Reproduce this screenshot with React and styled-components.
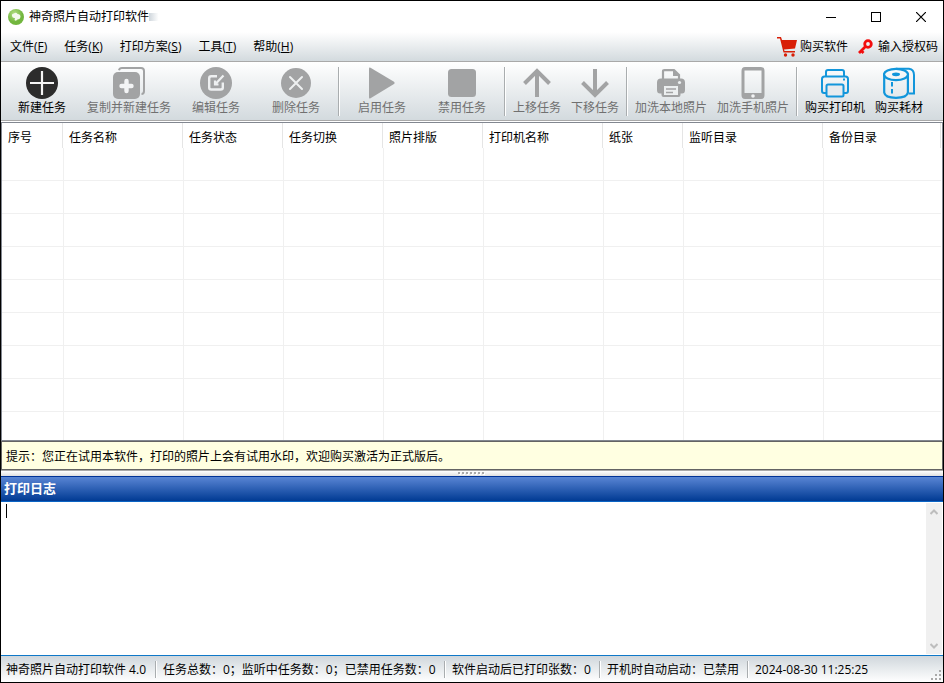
import React from "react";
import styled, { createGlobalStyle } from "styled-components";

const GlobalStyle = createGlobalStyle`
  * { box-sizing: border-box; }
  body {
    margin: 0;
    background: #fff;
    color: #000;
    font: 12px/16px "Open Sans", "Noto Sans CJK SC", sans-serif;
  }
  button { font: inherit; color: inherit; background: none; border: 0; padding: 0; margin: 0; }
`;

const Window = styled.div`
  min-height: 100vh;
  display: flex;
  flex-direction: column;
  border: 1px solid #000;
  background: #fff;
  white-space: nowrap;
`;

const TitleBar = styled.header`
  display: flex;
  align-items: center;
  height: 31px;
  padding-left: 7px;
`;

const Title = styled.h1`
  margin: 0 0 0 5px;
  padding-top: 1px;
  font-size: 12px;
  font-weight: 400;
`;

const TitleFade = styled.span`
  width: 24px;
  height: 8px;
  margin-right: auto;
  background: linear-gradient(90deg, #cfd6dc, #fff 40%);
`;

const CaptionButton = styled.button`
  display: grid;
  place-items: center;
  width: 45px;
  height: 30px;
`;

const MenuBar = styled.nav`
  display: flex;
  align-items: center;
  gap: 1px;
  height: 30px;
  padding: 1px 5px 0 1px;
  background: linear-gradient(#fff, #d3dade);
  border-bottom: 1px solid #a9a9a9;
`;

const MenuButton = styled.button`
  padding: 0 8px;
`;

const LicenseLinks = styled.div`
  display: flex;
  gap: 10px;
  margin-left: auto;
`;

const LicenseButton = styled.button`
  display: flex;
  align-items: center;
  gap: ${(p) => p.$gap}px;
`;

const ToolBar = styled.div`
  display: flex;
  height: 59px;
  padding-left: 1px;
  background: linear-gradient(#fff, #d3dade);
  border-bottom: 1px solid #a9a9a9;
`;

const ToolButton = styled.button`
  display: flex;
  flex-direction: column;
  align-items: center;
  gap: 1px;
  min-width: ${(p) => (p.$wide ? 80 : 58)}px;
  padding: 5px 5px 0;
  color: #000;
  &:disabled { color: #707070; }
  svg { display: block; }
`;

const ToolDivider = styled.span`
  width: 2px;
  margin: 5px 2px 4px;
  background: linear-gradient(90deg, #a9adaf 50%, #fff 50%);
`;

const TaskPane = styled.main`
  margin-top: 1px;
  padding-right: 1px;
  border: 1px solid #828790;
`;

const TaskTable = styled.table`
  width: 100%;
  table-layout: fixed;
  border-collapse: separate;
  border-spacing: 0;
`;

const HeadCell = styled.th`
  height: 25px;
  padding: 5px 0 0 6px;
  text-align: left;
  font-weight: 400;
  border-right: 1px solid #e5e5e5;
`;

const BodyCell = styled.td`
  height: ${(p) => (p.$last ? 28 : 33)}px;
  padding: 0;
  border-bottom: ${(p) => (p.$last ? 0 : 1)}px solid #f0f0f0;
  & + & { border-left: 1px solid #f0f0f0; }
`;

const Hint = styled.p`
  margin: 0;
  height: 29px;
  padding: 7px 4px 4px;
  background: #ffffe1;
  border: 1px solid #646464;
`;

const Splitter = styled.div`
  display: flex;
  justify-content: center;
  align-items: center;
  height: 6px;
  border-top: 1px solid #a9a9a9;
  background: linear-gradient(#fff, #e0e0e0);
`;

const LogHeader = styled.h2`
  margin: 0;
  height: 26px;
  padding: 3px;
  color: #fff;
  font-size: 13px;
  font-weight: 700;
  line-height: 16px;
  background: linear-gradient(#5985d4, #003a93);
  border-top: 1px solid #003296;
  border-bottom: 1px solid #0a64c4;
`;

const LogPane = styled.section`
  position: relative;
  flex: 1;
  display: flex;
  min-height: 120px;
  padding: 1px 1px 1px 0;
`;

const LogText = styled.textarea`
  flex: 1;
  padding: 2px 5px;
  border: 0;
  outline: 0;
  resize: none;
  font: inherit;
`;

const Caret = styled.span`
  position: absolute;
  left: 5px;
  top: 2px;
  width: 1px;
  height: 14px;
  background: #000;
`;

const ScrollTrack = styled.div`
  display: flex;
  flex-direction: column;
  justify-content: space-between;
  width: 16px;
  background: #f0f0f0;
`;

const ScrollButton = styled.button`
  display: grid;
  place-items: center;
  width: 16px;
  height: 17px;
`;

const StatusBar = styled.footer`
  display: flex;
  align-items: center;
  height: 27px;
  border-top: 1px solid #0f78c8;
  background: linear-gradient(#d0d7dc, #fff);
`;

const StatusItem = styled.span`
  width: ${(p) => p.$width}px;
  padding-top: 2px;
  padding-left: ${(p) => (p.$first ? 5 : 6)}px;
`;

const StatusDivider = styled.span`
  width: 2px;
  height: 17px;
  background: linear-gradient(90deg, #a9adaf 50%, #fff 50%);
`;

const GripSlot = styled.span`
  align-self: flex-end;
  margin-left: auto;
  padding: 0 1px 1px 0;
  line-height: 0;
`;

const GRAY = "#a2a3a4";
const BLUE = "#1296db";

const Icon = ({ children, size = 32, box = 32 }) => (
  <svg width={size} height={size} viewBox={`0 0 ${box} ${box}`} fill="none" aria-hidden="true">
    {children}
  </svg>
);

const icons = {
  add: (
    <>
      <circle cx="16" cy="16" r="16" fill="#2c2c2c" />
      <path d="M16 4v24M4 16h24" stroke="#f4f4f4" strokeWidth="2.2" />
    </>
  ),
  copy: (
    <>
      <path d="M6 3.2Q6.500 1 9 1H28Q31 1 31 4V24Q31 27 28.500 27" stroke={GRAY} strokeWidth="2" />
      <rect x="0" y="5" width="27" height="27" rx="5" fill={GRAY} />
      <path d="M13.500 14v10M8.500 19h10" stroke="#f3f4f5" strokeWidth="4.400" strokeLinecap="round" />
    </>
  ),
  edit: (
    <>
      <circle cx="16" cy="16" r="16" fill={GRAY} />
      <path d="M17 9.200H11.200Q9.200 9.200 9.200 11.200V20.500Q9.200 22.500 11.200 22.500H20.800Q22.800 22.500 22.800 20.500V15.500" stroke="#eef0f1" strokeWidth="2.400" />
      <path d="M15 17.500L23.500 8.500M15 13.500V17.500H18.500" stroke="#eef0f1" strokeWidth="2.200" />
    </>
  ),
  remove: (
    <>
      <circle cx="16" cy="16" r="15" fill={GRAY} />
      <path d="M10 10l12 12M22 10L10 22" stroke="#eef0f1" strokeWidth="2" strokeLinecap="round" />
    </>
  ),
  play: <path d="M3 1.500Q3 0 4.500 .8L28 14.800Q29.500 16 28 17L4.500 31.200Q3 32 3 30.500Z" fill={GRAY} />,
  stop: <rect x="2" y="2" width="28" height="28" rx="3.500" fill={GRAY} />,
  up: <path d="M16 30V4.500M3.500 16.500L16 4L28.500 16.500" stroke={GRAY} strokeWidth="4" />,
  down: <path d="M16 2V27.500M3.500 15.500L16 28L28.500 15.500" stroke={GRAY} strokeWidth="4" />,
  printerGray: (
    <>
      <path d="M8 12V4.500Q8 3.200 9.500 3.200H19L24 8V12" stroke={GRAY} strokeWidth="2.200" />
      <path d="M18 3v6h6z" fill={GRAY} />
      <path d="M6 11.500H26Q30 11.500 30 15.500V23Q30 26.500 27 26.500H25.500V28Q25.500 30 23.500 30H8.500Q6.500 30 6.500 28V26.500H5Q2 26.500 2 23V15.500Q2 11.500 6 11.500Z" fill={GRAY} />
      <circle cx="24.500" cy="15.500" r="1.600" fill="#eceff0" />
      <rect x="9" y="19" width="14" height="9" fill="#eceff0" />
      <path d="M11 22h10M11 25.500h7" stroke={GRAY} strokeWidth="1.600" />
    </>
  ),
  phone: (
    <>
      <path fillRule="evenodd" d="M8 0H24Q27.500 0 27.500 4V28Q27.500 32 24 32H8Q4.500 32 4.500 28V4Q4.500 0 8 0ZM7.500 3.500V26H24.500V3.500Z" fill={GRAY} />
      <circle cx="16" cy="29" r="1.800" fill="#f2f3f4" />
    </>
  ),
  printerBlue: (
    <>
      <path d="M7 9V5Q7 3 9 3H23Q25 3 25 5V9" stroke={BLUE} strokeWidth="2" />
      <path d="M7 26H5Q3 26 3 24V12Q3 9.500 5.500 9.500H26.500Q29 9.500 29 12V24Q29 26 27 26H25" stroke={BLUE} strokeWidth="2" />
      <rect x="7.500" y="17.500" width="17" height="12" rx="1.500" fill="#e8ebee" stroke={BLUE} strokeWidth="2" />
      <rect x="24" y="11.500" width="2" height="2" fill={BLUE} />
    </>
  ),
  roll: (
    <>
      <path d="M13 1.800H26Q31 2.500 31 8V26.500H25.500" stroke={BLUE} strokeWidth="2" />
      <ellipse cx="13" cy="7.500" rx="12" ry="5.700" stroke={BLUE} strokeWidth="2.200" />
      <ellipse cx="13" cy="7.300" rx="4" ry="1.900" fill={BLUE} />
      <path d="M1.200 8V25.500Q2 30.800 13 30.800Q24 30.800 24.900 25.500V8" stroke={BLUE} strokeWidth="2.200" />
      <path d="M9 15v14" stroke={BLUE} strokeWidth="2" strokeDasharray="4.500 2.500" />
    </>
  ),
};

const tools = [
  { label: "新建任务", icon: "add", wide: true, on: true },
  { label: "复制并新建任务", icon: "copy", wide: true },
  { label: "编辑任务", icon: "edit", wide: true },
  { label: "删除任务", icon: "remove", wide: true },
  null,
  { label: "启用任务", icon: "play", wide: true },
  { label: "禁用任务", icon: "stop", wide: true },
  null,
  { label: "上移任务", icon: "up" },
  { label: "下移任务", icon: "down" },
  null,
  { label: "加洗本地照片", icon: "printerGray" },
  { label: "加洗手机照片", icon: "phone" },
  null,
  { label: "购买打印机", icon: "printerBlue", on: true },
  { label: "购买耗材", icon: "roll", on: true },
];

const menus = [["文件", "F"], ["任务", "K"], ["打印方案", "S"], ["工具", "T"], ["帮助", "H"]];

const columns = [
  ["序号", 61], ["任务名称", 120], ["任务状态", 100], ["任务切换", 100], ["照片排版", 100],
  ["打印机名称", 120], ["纸张", 80], ["监听目录", 140], ["备份目录"],
];

const statuses = [
  ["神奇照片自动打印软件 4.0", 154],
  ["任务总数：0；监听中任务数：0；已禁用任务数：0", 287],
  ["软件启动后已打印张数：0", 153],
  ["开机时自动启动：已禁用", 146],
  ["2024-08-30 11:25:25", 130],
];

const AppLogo = () => (
  <svg width="16" height="16" viewBox="0 0 16 16" aria-hidden="true">
    <defs>
      <radialGradient id="leaf" cx="40%" cy="30%">
        <stop offset="0" stopColor="#b4df85" />
        <stop offset="1" stopColor="#72b63e" />
      </radialGradient>
    </defs>
    <circle cx="8" cy="8" r="8" fill="url(#leaf)" />
    <path d="M4 7Q3.500 4.500 6 4.500Q8 2.800 9.500 5Q12.500 5 12.500 8Q12 10.500 9.500 10.500Q8 12.500 6.500 11L7 9Q4.500 9.500 4 7Z" fill="#f4faed" />
  </svg>
);

const Cart = () => (
  <svg width="20" height="20" viewBox="0 0 20 20" fill="#d81e06" aria-hidden="true">
    <path d="M0 0H4L5 3H20L18 11.500L7 12.500L7.500 14H18V15.500H6.500L3 1.500H0Z" />
    <circle cx="8.500" cy="18" r="1.700" />
    <circle cx="16" cy="18" r="1.700" />
  </svg>
);

const Key = () => (
  <svg width="15" height="16" viewBox="0 0 15 16" fill="none" aria-hidden="true">
    <circle cx="10" cy="5" r="3.300" stroke="#f20d0d" strokeWidth="2.800" />
    <path d="M7.500 7.500L1 14M3 11.500L5.500 14" stroke="#f20d0d" strokeWidth="2.800" />
  </svg>
);

const Chevron = ({ d }) => (
  <svg width="8" height="6" viewBox="0 0 8 6" fill="none" aria-hidden="true">
    <path d={d} stroke="#bdbdbd" strokeWidth="2" />
  </svg>
);

export default function App() {
  return (
    <Window>
      <GlobalStyle />
      <TitleBar>
        <AppLogo />
        <Title>神奇照片自动打印软件</Title>
        <TitleFade />
        <CaptionButton aria-label="最小化">
          <svg width="10" height="10"><path d="M0 5.500H10" stroke="#000" /></svg>
        </CaptionButton>
        <CaptionButton aria-label="最大化">
          <svg width="10" height="10"><rect x=".5" y=".5" width="9" height="9" fill="none" stroke="#000" /></svg>
        </CaptionButton>
        <CaptionButton aria-label="关闭">
          <svg width="10" height="10"><path d="M0 0L10 10M10 0L0 10" stroke="#000" strokeWidth="1.200" /></svg>
        </CaptionButton>
      </TitleBar>

      <MenuBar>
        {menus.map(([name, key]) => (
          <MenuButton key={key}>{name}(<u>{key}</u>)</MenuButton>
        ))}
        <LicenseLinks>
          <LicenseButton $gap={3}><Cart />购买软件</LicenseButton>
          <LicenseButton $gap={5}><Key />输入授权码</LicenseButton>
        </LicenseLinks>
      </MenuBar>

      <ToolBar role="toolbar">
        {tools.map((tool, i) =>
          tool ? (
            <ToolButton key={i} $wide={tool.wide} disabled={!tool.on}>
              <Icon>{icons[tool.icon]}</Icon>
              {tool.label}
            </ToolButton>
          ) : (
            <ToolDivider key={i} />
          )
        )}
      </ToolBar>

      <TaskPane>
        <TaskTable>
          <colgroup>
            {columns.map(([name, width]) => <col key={name} width={width} />)}
          </colgroup>
          <thead>
            <tr>{columns.map(([name]) => <HeadCell key={name}>{name}</HeadCell>)}</tr>
          </thead>
          <tbody>
            {Array.from({ length: 9 }, (_, row) => (
              <tr key={row}>
                {columns.map(([name]) => <BodyCell key={name} $last={row === 8} />)}
              </tr>
            ))}
          </tbody>
        </TaskTable>
      </TaskPane>

      <Hint>提示：您正在试用本软件，打印的照片上会有试用水印，欢迎购买激活为正式版后。</Hint>
      <Splitter>
        <svg width="28" height="3" aria-hidden="true">
          {[0, 4, 8, 12, 16, 20, 24].map((x) => (
            <g key={x}>
              <rect x={x + 1} y="1" width="2" height="2" fill="#fff" />
              <rect x={x} y="0" width="2" height="2" fill="#a9a9a9" />
            </g>
          ))}
        </svg>
      </Splitter>

      <LogHeader id="log-title">打印日志</LogHeader>
      <LogPane>
        <LogText aria-labelledby="log-title" />
        <Caret />
        <ScrollTrack>
          <ScrollButton aria-label="向上滚动"><Chevron d="M.5 5L4 1.500L7.500 5" /></ScrollButton>
          <ScrollButton aria-label="向下滚动"><Chevron d="M.5 1L4 4.500L7.500 1" /></ScrollButton>
        </ScrollTrack>
      </LogPane>

      <StatusBar>
        {statuses.map(([text, width], i) => (
          <React.Fragment key={text}>
            {i > 0 && <StatusDivider />}
            <StatusItem $width={width} $first={i === 0}>{text}</StatusItem>
          </React.Fragment>
        ))}
        <GripSlot>
          <svg width="11" height="11" fill="#a9a9a9" aria-hidden="true">
            {[[8, 0], [4, 4], [8, 4], [0, 8], [4, 8], [8, 8]].map(([x, y]) => (
              <rect key={`${x}-${y}`} x={x} y={y} width="2" height="2" />
            ))}
          </svg>
        </GripSlot>
      </StatusBar>
    </Window>
  );
}
